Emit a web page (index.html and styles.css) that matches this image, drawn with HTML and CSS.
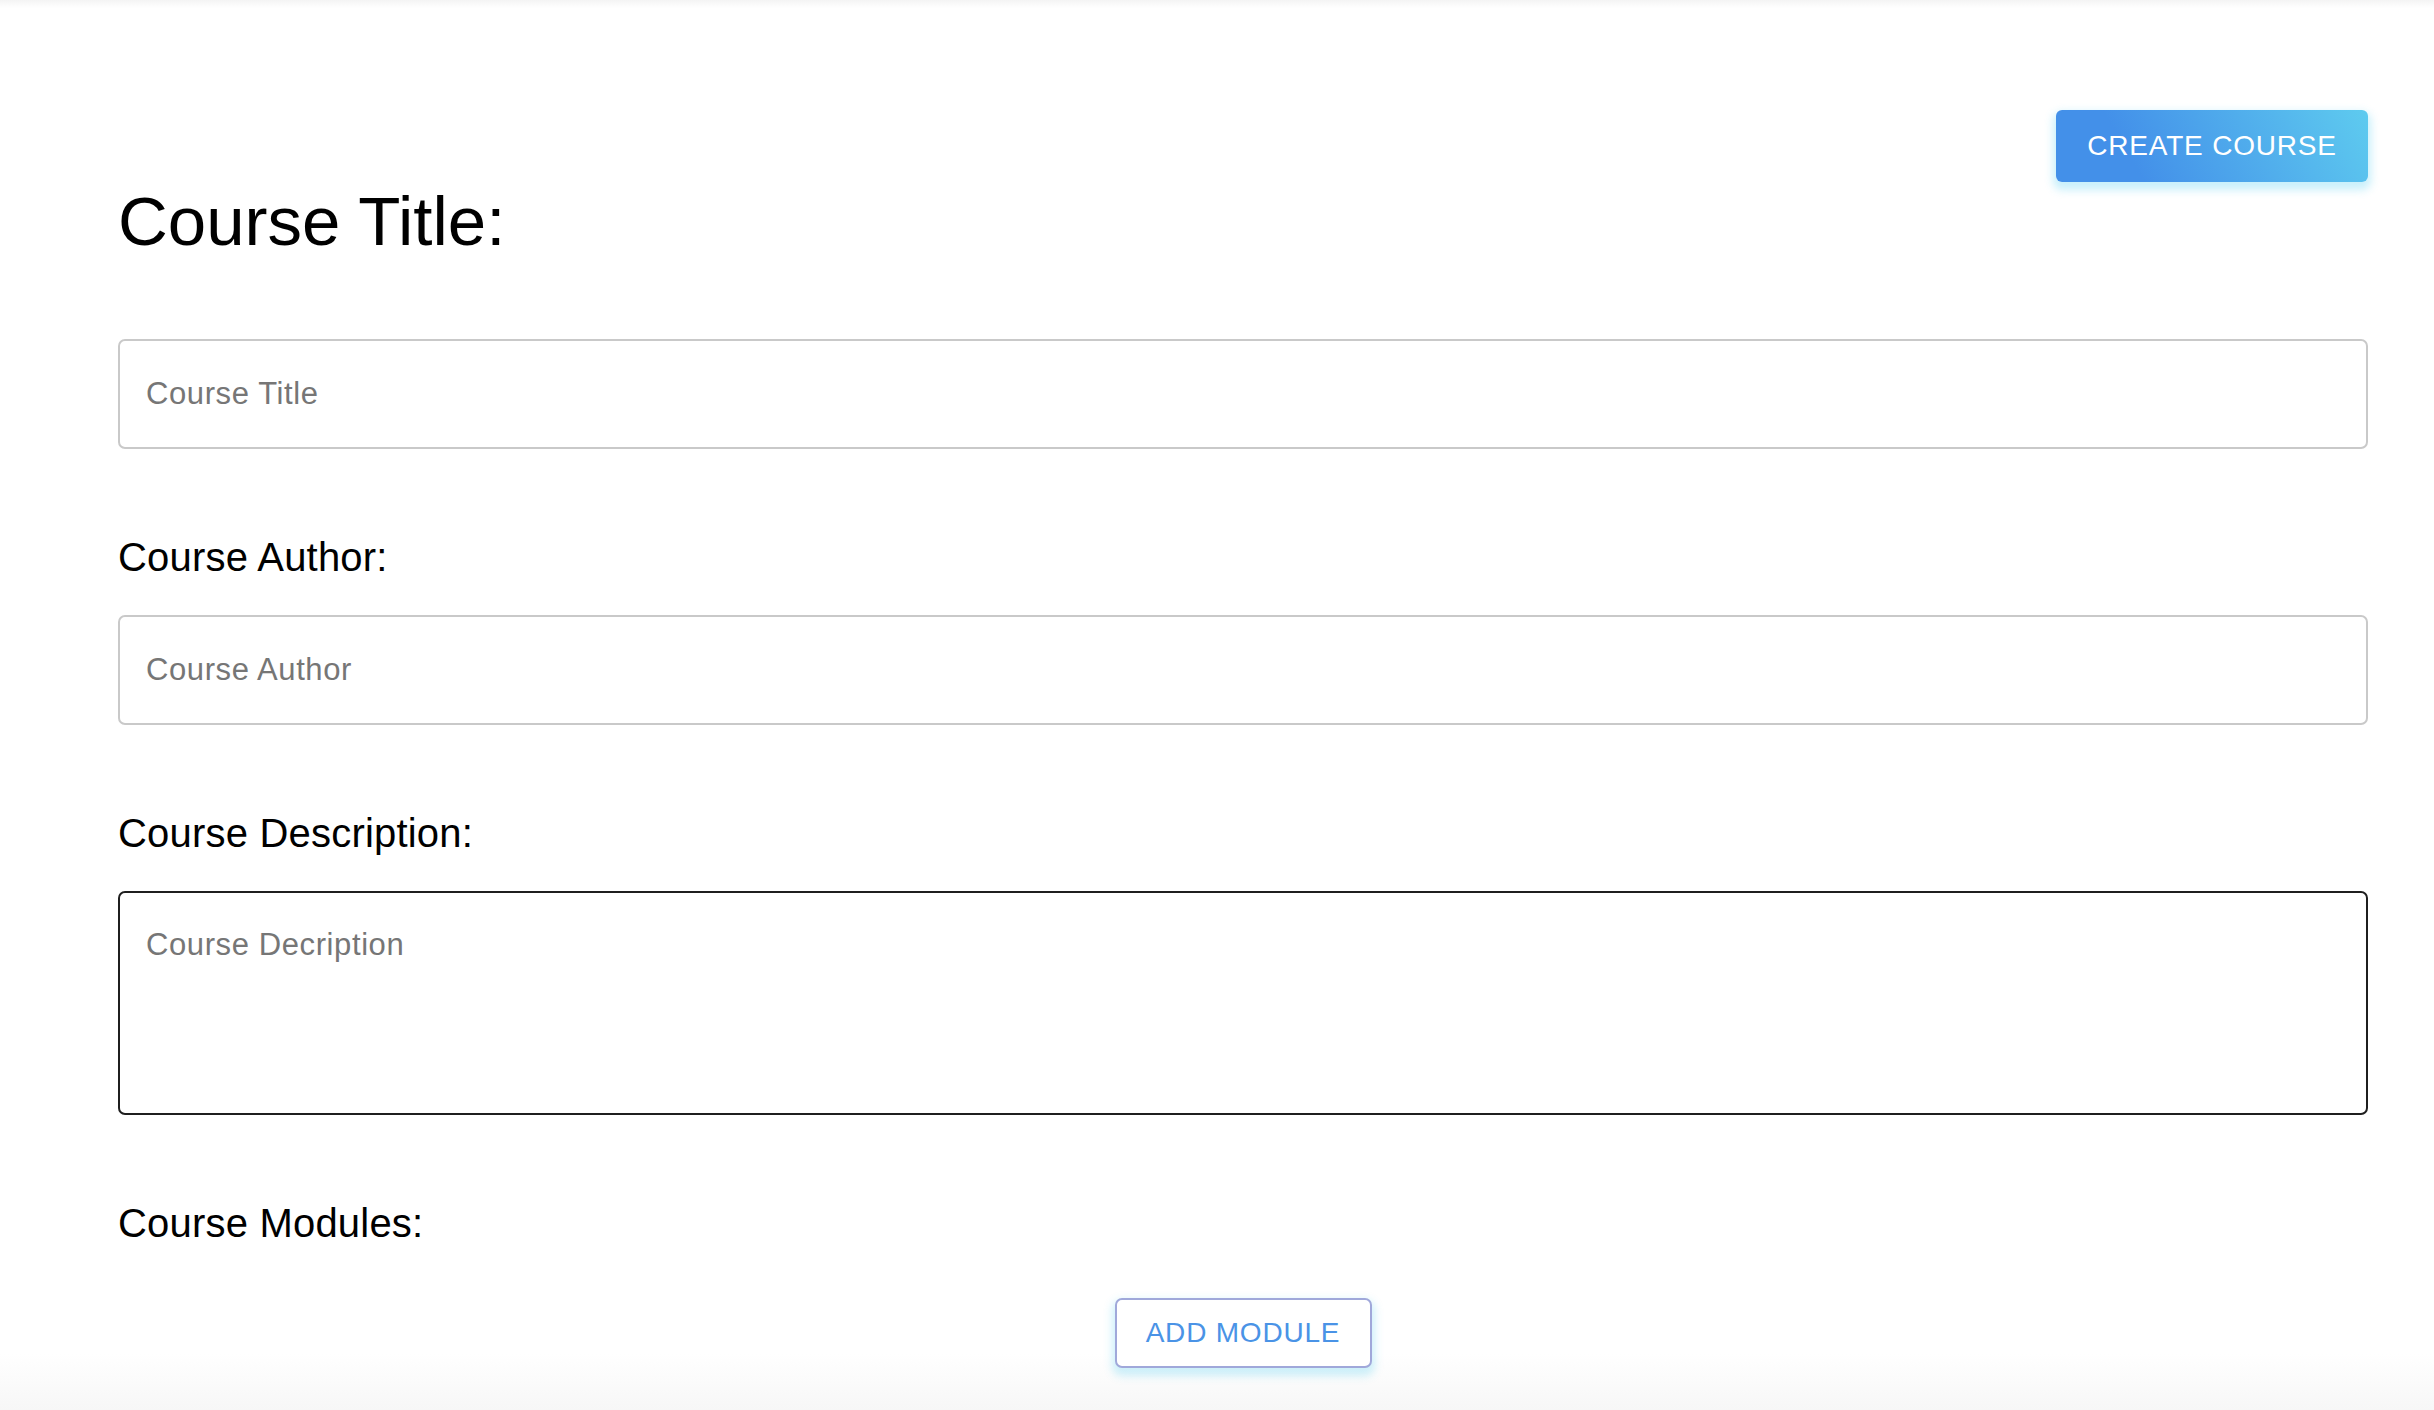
FILE: index.html
```html
<!DOCTYPE html>
<html lang="en">
<head>
<meta charset="utf-8">
<title>Create Course</title>
<link rel="stylesheet" href="styles.css">
</head>
<body>
<main class="page">
  <div class="toolbar">
    <button class="btn-create" type="button">Create Course</button>
  </div>
  <h1 class="title">Course Title:</h1>
  <input class="field field-first" type="text" placeholder="Course Title">
  <label class="label">Course Author:</label>
  <input class="field" type="text" placeholder="Course Author">
  <label class="label">Course Description:</label>
  <textarea class="area" placeholder="Course Decription"></textarea>
  <label class="label label-modules">Course Modules:</label>
  <button class="btn-add" type="button">Add Module</button>
</main>
</body>
</html>
```

FILE: styles.css
```css
html, body {
  margin: 0;
  padding: 0;
  height: 100%;
}

body {
  font-family: "Liberation Sans", Arial, Helvetica, sans-serif;
  color: #000;
  background: linear-gradient(to bottom, #f4f4f4 0px, #ffffff 8px, #ffffff calc(100% - 56px), #f7f7f7 100%);
  overflow: hidden;
}

.page {
  display: flex;
  flex-direction: column;
  padding: 110px 66px 0 118px;
}

.toolbar {
  display: flex;
  justify-content: flex-end;
}

.btn-create {
  width: 312px;
  height: 72px;
  border: 0;
  border-radius: 6px;
  background: linear-gradient(60deg, #4390e9 25%, #5ecbef 100%);
  box-shadow: 0 5px 9px 3px rgba(60, 200, 240, 0.28);
  color: #fff;
  font-family: "Liberation Sans", Arial, sans-serif;
  font-size: 28px;
  letter-spacing: 0.8px;
  text-transform: uppercase;
  padding: 0;
  cursor: pointer;
}

.title {
  margin: 0;
  font-size: 69px;
  font-weight: 400;
  line-height: 80px;
}

.field {
  box-sizing: border-box;
  width: 100%;
  height: 110px;
  border: 2px solid #c9c9c9;
  border-radius: 7px;
  padding: 0 26px;
  font-family: "Liberation Sans", Arial, sans-serif;
  font-size: 31px;
  letter-spacing: 0.6px;
  color: #222;
  background: #fff;
  outline: none;
}

.field-first {
  margin-top: 77px;
}

.field::placeholder,
.area::placeholder {
  color: #767676;
  opacity: 1;
}

.label {
  display: block;
  margin: 85px 0 35px;
  font-size: 40px;
  line-height: 46px;
  letter-spacing: 0.2px;
}

.area {
  box-sizing: border-box;
  width: 100%;
  height: 224px;
  border: 2px solid #1f1f1f;
  border-radius: 7px;
  padding: 34px 26px;
  font-family: "Liberation Sans", Arial, sans-serif;
  font-size: 31px;
  letter-spacing: 0.6px;
  resize: none;
  outline: none;
  background: #fff;
}

.label-modules {
  margin-bottom: 52px;
}

.btn-add {
  align-self: center;
  width: 257px;
  height: 70px;
  box-sizing: border-box;
  border: 2px solid #a0a8da;
  border-radius: 7px;
  background: #fff;
  box-shadow: 0 5px 9px 3px rgba(60, 200, 240, 0.25);
  color: #4a93e6;
  font-family: "Liberation Sans", Arial, sans-serif;
  font-size: 28px;
  letter-spacing: 0.8px;
  text-transform: uppercase;
  padding: 0;
  cursor: pointer;
}
```
